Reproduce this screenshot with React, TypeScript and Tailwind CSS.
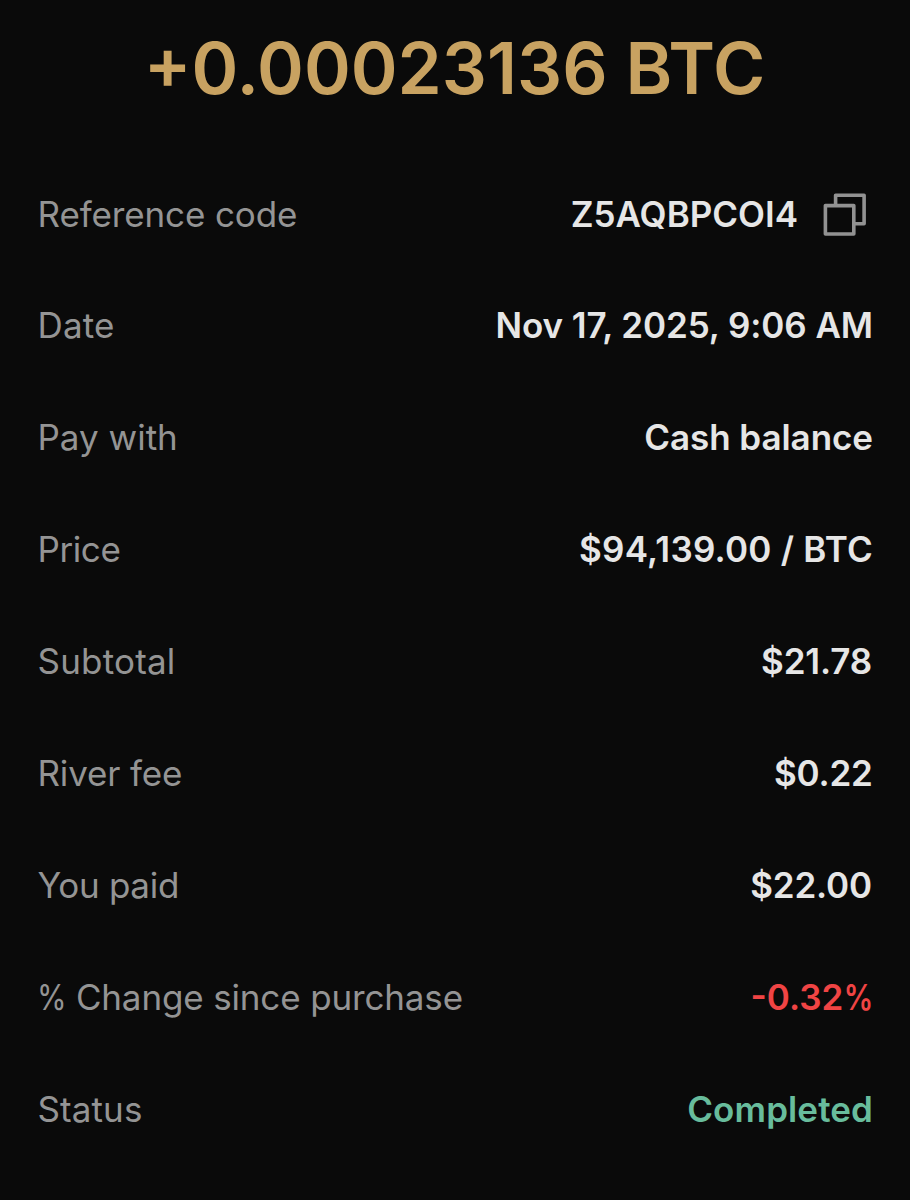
interface DetailRow {
  label: string;
  value: string;
  labelClass: string;
  valueClass: string;
  copyable?: boolean;
}

const rows: DetailRow[] = [
  { label: 'Reference code', value: 'Z5AQBPCOI4', labelClass: 'tracking-[-0.12px]', valueClass: 'text-[#e6e6e6]', copyable: true },
  { label: 'Date', value: 'Nov 17, 2025, 9:06 AM', labelClass: 'tracking-[0.2px]', valueClass: 'text-[#e6e6e6] tracking-[-0.08px]' },
  { label: 'Pay with', value: 'Cash balance', labelClass: 'tracking-normal', valueClass: 'text-[#e6e6e6] tracking-[-0.05px]' },
  { label: 'Price', value: '$94,139.00 / BTC', labelClass: 'tracking-[-0.4px]', valueClass: 'text-[#e6e6e6] tracking-[0.25px]' },
  { label: 'Subtotal', value: '$21.78', labelClass: 'tracking-[0.2px]', valueClass: 'text-[#e6e6e6] tracking-[-0.15px] pr-px' },
  { label: 'River fee', value: '$0.22', labelClass: 'tracking-[-0.15px]', valueClass: 'text-[#e6e6e6] tracking-[-0.25px] pr-[0.5px]' },
  { label: 'You paid', value: '$22.00', labelClass: 'tracking-[-0.3px]', valueClass: 'text-[#e6e6e6] tracking-[-0.15px] pr-px' },
  { label: '% Change since purchase', value: '-0.32%', labelClass: 'tracking-[-0.15px]', valueClass: 'text-[#f04444]' },
  { label: 'Status', value: 'Completed', labelClass: 'tracking-[0.1px]', valueClass: 'text-[#68bc9c] tracking-[0.1px]' },
];

const CopyIcon = () => (
  <svg width="44" height="44" viewBox="0 0 44 44" fill="none" stroke="#929292" strokeWidth="3.6" strokeLinejoin="round">
    <path d="M12.6 13.6V3.3H41.1V31.7H30.8" />
    <rect x="2.4" y="13.6" width="28.4" height="28.4" />
  </svg>
);

const App = () => (
  <main className="h-[1200px] w-[910px] overflow-hidden bg-[#0a0a0a] font-['Inter',sans-serif]">
    <h1 className="flex h-[159px] items-center justify-center pr-px pb-[23px] text-[71px] font-semibold text-[#c8a261]">
      +0.00023136 BTC
    </h1>
    <dl>
      {rows.map((row) => (
        <div
          key={row.label}
          className="flex h-[112px] items-center justify-between pr-[37px] pl-[37.5px] first:h-[110px]"
        >
          <dt className={`text-[35px] leading-[52px] text-[#949494] ${row.labelClass}`}>
            {row.label.startsWith('%') ? (
              <>
                <span className="-mr-[4.5px] -ml-px inline-block origin-left scale-x-[0.86]">%</span>
                {row.label.slice(1)}
              </>
            ) : (
              row.label
            )}
          </dt>
          <dd className={`flex items-center text-[35px] leading-[52px] font-semibold ${row.valueClass}`}>
            {row.value.endsWith('%') ? (
              <>
                {row.value.slice(0, -1)}
                <span className="-ml-[5.5px] inline-block origin-right scale-x-[0.84]">%</span>
              </>
            ) : (
              row.value
            )}
            {row.copyable && (
              <button aria-label="Copy reference code" className="mr-[6px] ml-[25px]">
                <CopyIcon />
              </button>
            )}
          </dd>
        </div>
      ))}
    </dl>
  </main>
);

export default App;
